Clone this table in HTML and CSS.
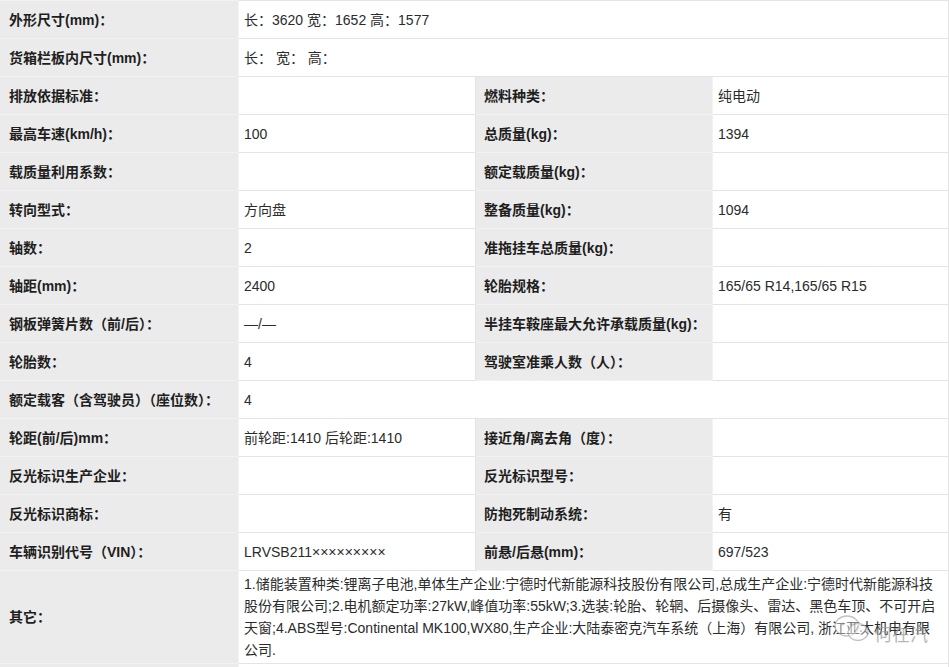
FILE: index.html
```html
<!DOCTYPE html>
<html lang="zh">
<head>
<meta charset="utf-8">
<link rel="stylesheet" href="styles.css">
</head>
<body>
<table class="spec">
  <colgroup>
    <col class="c1"><col class="c2"><col class="c3"><col class="c4">
  </colgroup>
  <tr><td class="k">外形尺寸(mm)：</td><td class="v" colspan="3">长：3620 宽：1652 高：1577</td></tr>
  <tr><td class="k">货箱栏板内尺寸(mm)：</td><td class="v" colspan="3">长：&nbsp;宽：&nbsp;高：</td></tr>
  <tr><td class="k">排放依据标准：</td><td class="v"></td><td class="k">燃料种类：</td><td class="v">纯电动</td></tr>
  <tr><td class="k">最高车速(km/h)：</td><td class="v">100</td><td class="k">总质量(kg)：</td><td class="v">1394</td></tr>
  <tr><td class="k">载质量利用系数：</td><td class="v"></td><td class="k">额定载质量(kg)：</td><td class="v"></td></tr>
  <tr><td class="k">转向型式：</td><td class="v">方向盘</td><td class="k">整备质量(kg)：</td><td class="v">1094</td></tr>
  <tr><td class="k">轴数：</td><td class="v">2</td><td class="k">准拖挂车总质量(kg)：</td><td class="v"></td></tr>
  <tr><td class="k">轴距(mm)：</td><td class="v">2400</td><td class="k">轮胎规格：</td><td class="v">165/65 R14,165/65 R15</td></tr>
  <tr><td class="k">钢板弹簧片数（前/后）：</td><td class="v">—/—</td><td class="k">半挂车鞍座最大允许承载质量(kg)：</td><td class="v"></td></tr>
  <tr><td class="k">轮胎数：</td><td class="v">4</td><td class="k">驾驶室准乘人数（人）：</td><td class="v"></td></tr>
  <tr><td class="k">额定载客（含驾驶员）（座位数）：</td><td class="v" colspan="3">4</td></tr>
  <tr><td class="k">轮距(前/后)mm：</td><td class="v">前轮距:1410 后轮距:1410</td><td class="k">接近角/离去角（度）：</td><td class="v"></td></tr>
  <tr><td class="k">反光标识生产企业：</td><td class="v"></td><td class="k">反光标识型号：</td><td class="v"></td></tr>
  <tr><td class="k">反光标识商标：</td><td class="v"></td><td class="k">防抱死制动系统：</td><td class="v">有</td></tr>
  <tr><td class="k">车辆识别代号（VIN）：</td><td class="v">LRVSB211×××××××××</td><td class="k">前悬/后悬(mm)：</td><td class="v">697/523</td></tr>
  <tr><td class="k">其它：</td><td class="v long" colspan="3">1.储能装置种类:锂离子电池,单体生产企业:宁德时代新能源科技股份有限公司,总成生产企业:宁德时代新能源科技股份有限公司;2.电机额定功率:27kW,峰值功率:55kW;3.选装:轮胎、轮辋、后摄像头、雷达、黑色车顶、不可开启天窗;4.ABS型号:Continental MK100,WX80,生产企业:大陆泰密克汽车系统（上海）有限公司, 浙江亚太机电有限公司.</td></tr>
  <tr><td class="k"></td><td class="v" colspan="3"></td></tr>
</table>
<div class="watermark">
  <svg width="40" height="32" viewBox="0 0 40 32">
    <ellipse cx="15" cy="13" rx="12" ry="10" fill="rgba(255,255,255,0.6)" stroke="#aaa" stroke-width="1.3"/>
    <ellipse cx="26" cy="19" rx="10" ry="8.5" fill="rgba(255,255,255,0.6)" stroke="#aaa" stroke-width="1.3"/>
    <circle cx="11" cy="11" r="1.4" fill="#aaa"/><circle cx="19" cy="11" r="1.4" fill="#aaa"/>
    <circle cx="23" cy="18" r="1.1" fill="#aaa"/><circle cx="29" cy="18" r="1.1" fill="#aaa"/>
  </svg>
  <span class="wm-text">何在汽</span>
</div>
</body>
</html>
```
FILE: styles.css
```css
html, body {
  margin: 0;
  padding: 0;
  background: #fff;
}
body {
  font-family: "Liberation Sans", "Noto Sans CJK SC", sans-serif;
  font-size: 14px;
  color: #2b2b2b;
  position: relative;
  overflow: hidden;
  height: 667px;
}
.spec {
  border-collapse: collapse;
  table-layout: fixed;
  width: 948px;
}
.c1 { width: 238px; }
.c2 { width: 237px; }
.c3 { width: 237px; }
.c4 { width: 236px; }
.spec td {
  border: 1px solid #e4e4e4;
  height: 38px;
  padding: 0 5px;
  box-sizing: border-box;
  vertical-align: middle;
  line-height: 22px;
  white-space: nowrap;
  overflow: hidden;
}
.spec td.k {
  background: #ebebeb;
  font-weight: bold;
  color: #1e1e1e;
  padding-left: 8px;
  border-color: #f2f2f2 #f2f2f2 #f2f2f2 #ebebeb;
}
.spec td.v {
  background: #fff;
}
.spec td.long {
  white-space: normal;
  height: 91px;
  padding: 2px 5px;
  word-break: break-all;
}
.watermark {
  position: absolute;
  left: 832px;
  top: 612px;
  display: flex;
  align-items: center;
  gap: 2px;
  opacity: 0.7;
}
.wm-text {
  color: #999;
  font-size: 18px;
  font-family: "Noto Sans CJK SC", sans-serif;
  margin-top: 8px;
}
```
